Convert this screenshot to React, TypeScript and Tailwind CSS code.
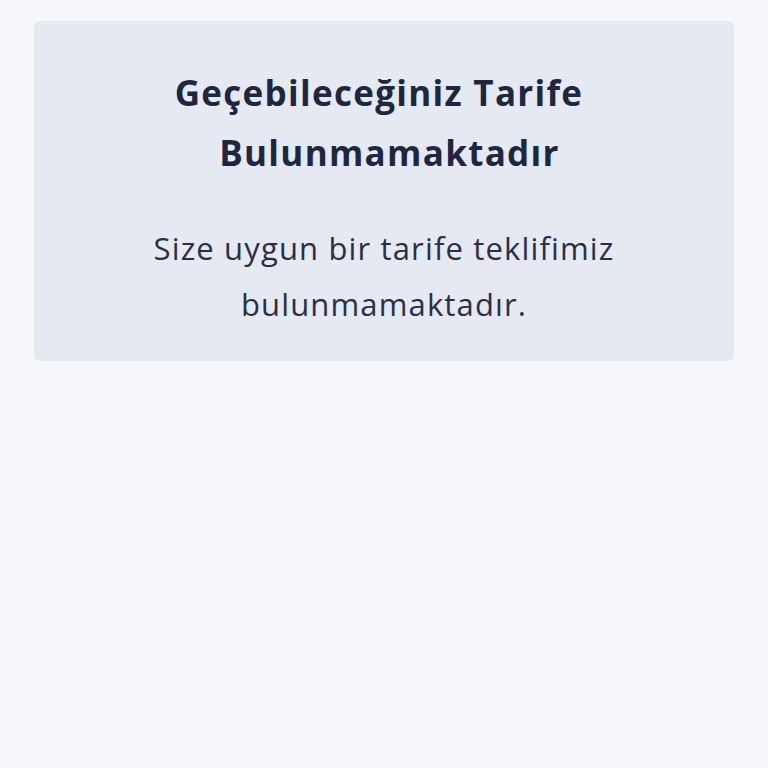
export default function App() {
  return (
    <main className="min-h-screen bg-[#f5f7fa] px-[34px] pt-[21px]" style={{ fontFamily: '"Open Sans", "Noto Sans", sans-serif' }}>
      {/* Empty state: no tariff to switch to */}
      <section className="rounded-[6px] bg-[#e5e9f2] px-10 pb-[29px] pt-[42px] text-center">
        <h2 className="text-[35px] font-bold leading-[60px] tracking-[1.3px] text-[#1f2640]">
          <span className="block pr-[10px]">Geçebileceğiniz Tarife</span>
          <span className="block pl-[11px]">Bulunmamaktadır</span>
        </h2>
        <p className="mx-auto mt-[37px] max-w-[500px] text-[31px] leading-[56px] tracking-[1.15px] text-[#2b2f45]">
          Size uygun bir tarife teklifimiz bulunmamaktadır.
        </p>
      </section>
    </main>
  );
}
